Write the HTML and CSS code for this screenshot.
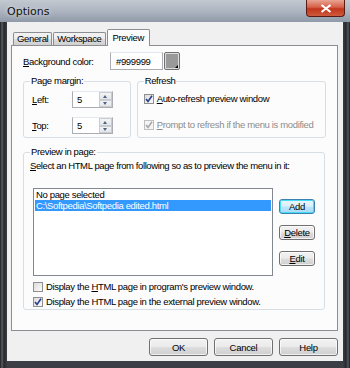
FILE: index.html
```html
<!DOCTYPE html>
<html lang="en">
<head>
    <meta charset="UTF-8">
    <title>Options</title>
    <link rel="stylesheet" href="styles.css">
</head>
<body>
    <div class="window">
        <div class="titlebar">
            <span class="title">Options</span>
            <button class="close">
                <svg width="12" height="9" viewBox="0 0 12 9"><path d="M1.5 1 L10.5 8 M10.5 1 L1.5 8" stroke="#fff" stroke-width="2.2"/></svg>
            </button>
        </div>

        <div class="client">
            <div class="tabs">
                <div class="tab">General</div>
                <div class="tab">Workspace</div>
                <div class="tab active">Preview</div>
            </div>

            <div class="panel">
                <div class="row bg-row">
                    <span class="label"><u>B</u>ackground color:</span>
                    <span class="textbox color-text">#999999</span>
                    <span class="color-btn"><span class="swatch"></span></span>
                </div>

                <div class="row groups">
                    <fieldset class="group margin-group">
                        <legend>Page margin:</legend>
                        <div class="spin-row">
                            <span class="label spin-label"><u>L</u>eft:</span>
                            <span class="spin"><span class="spin-val">5</span><span class="arrows"><i class="up"></i><i class="down"></i></span></span>
                        </div>
                        <div class="spin-row">
                            <span class="label spin-label"><u>T</u>op:</span>
                            <span class="spin"><span class="spin-val">5</span><span class="arrows"><i class="up"></i><i class="down"></i></span></span>
                        </div>
                    </fieldset>

                    <fieldset class="group refresh-group">
                        <legend>Refresh</legend>
                        <div class="check">
                            <span class="box checked"><svg width="8" height="8" viewBox="0 0 8 8"><path d="M1 4 L3 6.5 L7 0.8" fill="none" stroke="#2a3f8f" stroke-width="1.6"/></svg></span>
                            <span><u>A</u>uto-refresh preview window</span>
                        </div>
                        <div class="check disabled">
                            <span class="box checked"><svg width="8" height="8" viewBox="0 0 8 8"><path d="M1 4 L3 6.5 L7 0.8" fill="none" stroke="#a8a8a8" stroke-width="1.6"/></svg></span>
                            <span><u>P</u>rompt to refresh if the menu is modified</span>
                        </div>
                    </fieldset>
                </div>

                <fieldset class="group preview-group">
                    <legend>Preview in page:</legend>
                    <p class="hint"><u>S</u>elect an HTML page from following so as to preview the menu in it:</p>
                    <div class="list-row">
                        <div class="listbox">
                            <div class="item">No page selected</div>
                            <div class="item selected">C:\Softpedia\Softpedia edited.html</div>
                        </div>
                        <div class="side-buttons">
                            <button class="btn small default">Add</button>
                            <button class="btn small"><u>D</u>elete</button>
                            <button class="btn small"><u>E</u>dit</button>
                        </div>
                    </div>
                    <div class="check">
                        <span class="box"></span>
                        <span>Display the <u>H</u>TML page in program's preview window.</span>
                    </div>
                    <div class="check">
                        <span class="box checked"><svg width="8" height="8" viewBox="0 0 8 8"><path d="M1 4 L3 6.5 L7 0.8" fill="none" stroke="#2a3f8f" stroke-width="1.6"/></svg></span>
                        <span>Display the HTML page in the external preview window.</span>
                    </div>
                </fieldset>
            </div>

            <div class="footer">
                <button class="btn">OK</button>
                <button class="btn">Cancel</button>
                <button class="btn">Help</button>
            </div>
        </div>
    </div>
</body>
</html>
```

FILE: styles.css
```css
* {
    margin: 0;
    padding: 0;
    box-sizing: border-box;
}

body {
    width: 350px;
    height: 368px;
    overflow: hidden;
    background: #2b2e33;
    font-family: "Liberation Sans", Arial, sans-serif;
    font-size: 9.5px;
    letter-spacing: -0.35px;
    color: #000;
}

u {
    text-decoration: underline;
}

.window {
    width: 350px;
    height: 368px;
    padding: 0 7px 7px 7px;
    background:
        linear-gradient(180deg, #c4c9d0 0px, #aab3be 12px, #8f9aa8 22px, transparent 22px),
        linear-gradient(90deg, #1b1c1f 0px, #5a5d63 2px, #26282c 4px, #3b3e44 7px, #3b3e44 343px, #26282c 346px, #55585e 348px, #1b1c1f 350px);
}

.titlebar {
    height: 22px;
    display: flex;
    justify-content: space-between;
    align-items: flex-start;
}

.title {
    margin-top: 5px;
    font-family: "DejaVu Sans", sans-serif;
    font-size: 11px;
    letter-spacing: 0;
    color: #111;
    text-shadow: 0 0 4px rgba(255,255,255,0.8);
}

.close {
    width: 39px;
    height: 17px;
    margin-right: -2px;
    border: 1px solid #5a1c12;
    border-top: none;
    border-radius: 0 0 4px 4px;
    background: linear-gradient(180deg, #e8a493 0%, #d56048 45%, #c2351c 55%, #cf5a3c 100%);
    display: flex;
    align-items: center;
    justify-content: center;
}

.client {
    height: 339px;
    background: #f0f0f0;
    padding: 7px 5px 0 4px;
}

.tabs {
    display: flex;
    align-items: flex-end;
    height: 16px;
    padding-left: 2px;
    position: relative;
    z-index: 1;
}

.tab {
    height: 13px;
    padding: 0 3px;
    line-height: 12px;
    border: 1px solid #8c8e94;
    border-bottom: none;
    border-radius: 2px 2px 0 0;
    background: linear-gradient(180deg, #f3f3f3 0%, #ebebeb 50%, #dddddd 51%, #cfcfcf 100%);
    margin-right: 1px;
}

.tab.active {
    height: 17px;
    background: #fcfcfc;
    padding: 0 5px;
    line-height: 15px;
    margin-bottom: -1px;
}

.panel {
    height: 286px;
    background: #fcfcfc;
    border: 1px solid #8c8e94;
    padding: 6px 11px 0 11px;
}

.row {
    display: flex;
    align-items: center;
}

.bg-row .label {
    width: 87px;
}

.textbox {
    height: 18px;
    border: 1px solid #abadb3;
    border-top-color: #e3e9ef;
    background: #fff;
    padding: 2px 5px;
    line-height: 13px;
}

.color-text {
    width: 53px;
}

.color-btn {
    width: 16px;
    height: 18px;
    margin-left: 1px;
    border: 1px solid #707070;
    border-radius: 2px;
    background: #dcdcdc;
    padding: 1px;
    position: relative;
}

.swatch {
    display: block;
    width: 100%;
    height: 100%;
    background: #999999;
}

.color-btn::after {
    content: "";
    position: absolute;
    right: 1px;
    bottom: 1px;
    border-left: 3px solid transparent;
    border-bottom: 3px solid #000;
}

.groups {
    align-items: stretch;
    margin-top: 5px;
    gap: 6px;
}

.group {
    border: 1px solid #d5dfe5;
    border-radius: 3px;
    padding: 0 6px 0 6px;
}

.group legend {
    padding: 0 1px;
    line-height: 12px;
}

.margin-group {
    width: 108px;
    height: 63px;
    padding-top: 4px;
    padding-left: 8px;
}

.margin-group legend {
    margin-left: -2px;
}

.spin-row {
    display: flex;
    align-items: center;
    height: 17px;
    margin-bottom: 9px;
}

.spin-label {
    width: 40px;
}

.spin {
    display: flex;
    width: 41px;
    height: 17px;
    border: 1px solid #abadb3;
    border-top-color: #e3e9ef;
    background: #fff;
}

.spin-val {
    flex: 1;
    padding-left: 4px;
    line-height: 15px;
}

.arrows {
    width: 13px;
    display: flex;
    flex-direction: column;
}

.arrows i {
    flex: 1;
    position: relative;
    background: linear-gradient(180deg, #f4f4f4, #e2e6ea);
    border: 1px solid #c8ccd2;
}

.arrows i::after {
    content: "";
    position: absolute;
    left: 3px;
    top: 2px;
    border-left: 2.5px solid transparent;
    border-right: 2.5px solid transparent;
}

.arrows .up::after {
    border-bottom: 3px solid #4d6185;
}

.arrows .down::after {
    top: 1px;
    border-top: 3px solid #4d6185;
}

.refresh-group {
    width: 190px;
    height: 63px;
    padding-top: 7px;
}

.check {
    display: flex;
    align-items: center;
    gap: 3px;
    height: 10px;
    line-height: 10px;
}

.refresh-group .check {
    margin-bottom: 16px;
}

.box {
    width: 10px;
    height: 10px;
    border: 1px solid #8f8f8f;
    background: linear-gradient(135deg, #dcdcdc, #fbfbfb);
    display: flex;
    align-items: center;
    justify-content: center;
    flex-shrink: 0;
}

.check.disabled {
    color: #8d8d8d;
}

.check.disabled .box {
    border-color: #c0c0c0;
    background: #f4f4f4;
}

.preview-group {
    width: 302px;
    height: 164px;
    margin-top: 8px;
    padding-top: 2px;
    padding-left: 9px;
}

.preview-group legend {
    margin-left: -3px;
}

.hint {
    line-height: 12px;
    margin-left: -3px;
    letter-spacing: -0.4px;
}

.list-row {
    display: flex;
    margin-top: 16px;
    gap: 6px;
}

.listbox {
    width: 240px;
    height: 88px;
    border: 1px solid #828790;
    background: #fff;
    padding: 1px;
}

.item {
    height: 10px;
    line-height: 10px;
    padding-left: 1px;
}

.item.selected {
    background: #3399ff;
    color: #fff;
    height: 11px;
    line-height: 11px;
}

.side-buttons {
    display: flex;
    flex-direction: column;
    gap: 11px;
    padding-top: 11px;
}

.btn {
    font-family: inherit;
    font-size: 9.5px;
    letter-spacing: -0.3px;
    color: #000;
    width: 59px;
    height: 18px;
    border: 1px solid #707070;
    border-radius: 3px;
    background: linear-gradient(180deg, #f2f2f2 0%, #ebebeb 48%, #dddddd 52%, #cfcfcf 100%);
    box-shadow: inset 0 0 0 1px rgba(255,255,255,0.7);
}

.btn.small {
    width: 36px;
    height: 15px;
    line-height: 11px;
}

.btn.default {
    border-color: #3c7fb1;
    background: linear-gradient(180deg, #eaf6fd 0%, #d9f0fc 48%, #bee6fd 52%, #a7d9f5 100%);
    box-shadow: inset 0 0 0 1px #48dbf5;
}

.preview-group .check {
    margin-top: 5px;
}

.preview-group .list-row + .check {
    margin-top: 6px;
}

.footer {
    display: flex;
    justify-content: flex-end;
    gap: 6px;
    margin-top: 7px;
}
```
